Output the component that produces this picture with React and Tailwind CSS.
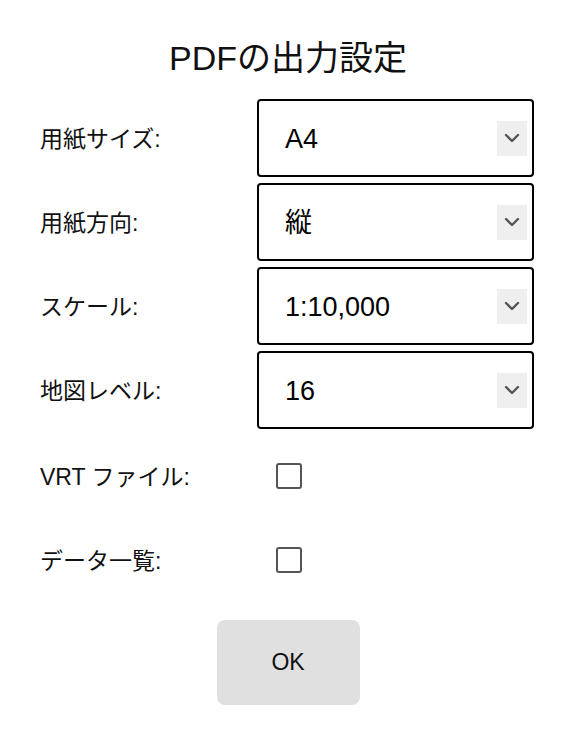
import React from "react";

const font = { fontFamily: '"Liberation Sans", "Noto Sans CJK JP", sans-serif' };

function Chevron() {
  return (
    <svg width="16" height="10" viewBox="0 0 16 10" fill="none">
      <path d="M2 2 L8 8 L14 2" stroke="#555" strokeWidth="2.4" strokeLinecap="round" strokeLinejoin="round" />
    </svg>
  );
}

function SelectRow({ label, value }) {
  return (
    <div className="flex items-center h-[84px]">
      <div className="w-[217px] text-[23px] text-[#111] pt-[2px]">{label}</div>
      <div className="w-[277px] h-[78px] border-2 border-black rounded-[4px] flex items-center justify-between pl-[26px] pr-[5px]">
        <span className="text-[27px] text-black pt-[3px]">{value}</span>
        <div className="w-[30px] h-[35px] bg-[#efefef] flex items-center justify-center">
          <Chevron />
        </div>
      </div>
    </div>
  );
}

function CheckRow({ label }) {
  return (
    <div className="flex items-center h-[84px] pt-[4px]">
      <div className="w-[217px] text-[23px] text-[#111] pt-[2px]">{label}</div>
      <div className="ml-[19px] w-[26px] h-[26px] border-[2.5px] border-[#555] rounded-[3px] bg-white" />
    </div>
  );
}

export default function App() {
  return (
    <div className="w-[576px] h-[736px] bg-white" style={font}>
      <div className="pt-[36px] h-[96px]">
        <h1 className="text-center text-[34px] leading-[44px] text-[#111]">PDFの出力設定</h1>
      </div>
      <div className="px-[40px]">
        <SelectRow label="用紙サイズ:" value="A4" />
        <SelectRow label="用紙方向:" value="縦" />
        <SelectRow label="スケール:" value="1:10,000" />
        <SelectRow label="地図レベル:" value="16" />
        <CheckRow label="VRT ファイル:" />
        <CheckRow label="データ一覧:" />
      </div>
      <div className="flex justify-center mt-[20px]">
        <button className="w-[143px] h-[85px] bg-[#e0e0e0] rounded-[8px] text-[23px] text-[#111]">OK</button>
      </div>
    </div>
  );
}
